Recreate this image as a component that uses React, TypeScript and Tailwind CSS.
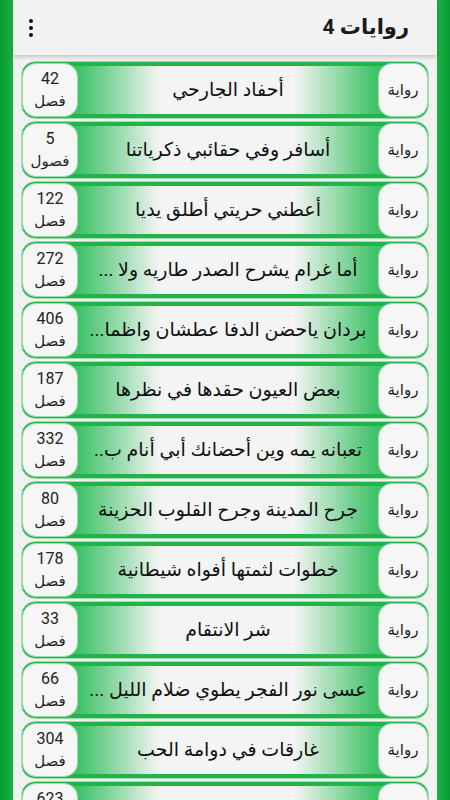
// Novels list screen: green framed list of novel titles with chapter counts

const NOVELS: { title: string; count: number; unit: string }[] = [
  { title: "أحفاد الجارحي", count: 42, unit: "فصل" },
  { title: "أسافر وفي حقائبي ذكرياتنا", count: 5, unit: "فصول" },
  { title: "أعطني حريتي أطلق يديا", count: 122, unit: "فصل" },
  { title: "أما غرام يشرح الصدر طاريه ولا ...", count: 272, unit: "فصل" },
  { title: "بردان ياحضن الدفا عطشان واظما...", count: 406, unit: "فصل" },
  { title: "بعض العيون حقدها في نظرها", count: 187, unit: "فصل" },
  { title: "تعبانه يمه وين أحضانك أبي أنام ب..", count: 332, unit: "فصل" },
  { title: "جرح المدينة وجرح القلوب الحزينة", count: 80, unit: "فصل" },
  { title: "خطوات لثمتها أفواه شيطانية", count: 178, unit: "فصل" },
  { title: "شر الانتقام", count: 33, unit: "فصل" },
  { title: "عسى نور الفجر يطوي ضلام الليل ...", count: 66, unit: "فصل" },
  { title: "غارقات في دوامة الحب", count: 304, unit: "فصل" },
  { title: "كبرياء عاشق", count: 623, unit: "فصل" },
];

function NovelRow({ title, count, unit }: { title: string; count: number; unit: string }) {
  return (
    <div className="relative flex h-[58px] items-stretch rounded-[14px] border border-[#9edcb0] bg-[linear-gradient(to_left,#3fc268_0%,#3fc268_13%,#f4f4f4_33%,#f4f4f4_66%,#3fc268_86%,#3fc268_100%)] shadow-[inset_0_4px_0_#22b44a,inset_0_-4px_0_#22b44a]">
      {/* type badge (right) */}
      <div className="my-[1px] flex w-[50px] items-center justify-center rounded-[14px] border border-[#9edcb0] bg-[#f6f6f6] text-[15px] text-[#222]">
        رواية
      </div>
      {/* title */}
      <div className="flex flex-1 items-center justify-center px-2 text-[19px] text-[#111] whitespace-nowrap overflow-hidden">
        {title}
      </div>
      {/* chapter count (left) */}
      <div className="my-[1px] flex w-[56px] flex-col items-center justify-center rounded-[14px] border border-[#9edcb0] bg-[#f6f6f6] leading-[22px] text-[#222]">
        <span className="text-[16px]">{count}</span>
        <span className="text-[15px]">{unit}</span>
      </div>
    </div>
  );
}

export default function App() {
  return (
    <div
      dir="rtl"
      className="flex h-[800px] w-[450px] overflow-hidden bg-[#f1f1f1]"
      style={{ fontFamily: "Roboto, 'DejaVu Sans', sans-serif" }}
    >
      {/* right green frame */}
      <div className="w-[13px] shrink-0 bg-[linear-gradient(to_left,#079a31,#17b443)]" />

      <div className="flex min-w-0 flex-1 flex-col">
        {/* app bar */}
        <div className="relative z-10 flex h-[55px] shrink-0 items-center justify-between bg-[#f2f2f2] pl-4 pr-7 shadow-[0_2px_4px_rgba(0,0,0,0.18)]">
          <span className="text-[21px] font-bold text-[#1a1a1a]">روايات 4</span>
          <div className="flex flex-col items-center gap-[3px]">
            <span className="h-[4px] w-[4px] rounded-full bg-[#111]" />
            <span className="h-[4px] w-[4px] rounded-full bg-[#111]" />
            <span className="h-[4px] w-[4px] rounded-full bg-[#111]" />
          </div>
        </div>

        {/* list */}
        <div className="flex flex-col gap-[2px] px-[8px] pt-[6px]">
          {NOVELS.map((n) => (
            <NovelRow key={n.title} {...n} />
          ))}
        </div>
      </div>

      {/* left green frame */}
      <div className="w-[13px] shrink-0 bg-[linear-gradient(to_right,#079a31,#17b443)]" />
    </div>
  );
}
